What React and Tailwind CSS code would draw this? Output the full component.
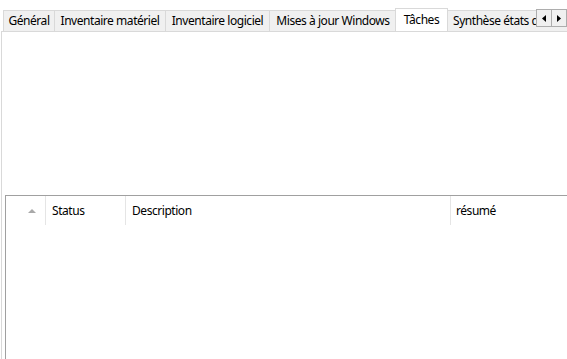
import React from "react";

const font = { fontFamily: '"Segoe UI", "Noto Sans", "Open Sans", sans-serif' };

function Tab({ label, w, selected }) {
  if (selected) {
    return (
      <div
        className="relative z-10 -mx-[2px] mb-[-1px] flex h-[24px] shrink-0 items-start justify-center border border-b-0 border-[#d9d9d9] bg-white pt-[2px] text-[12px] tracking-[-0.45px] text-black"
        style={{ width: w }}
      >
        {label}
      </div>
    );
  }
  return (
    <div
      className="flex h-[21px] shrink-0 items-center justify-center overflow-hidden whitespace-nowrap border-t border-r border-[#d9d9d9] bg-[#f0f0f0] text-[12px] tracking-[-0.45px] text-black first:border-l"
      style={{ width: w }}
    >
      {label}
    </div>
  );
}

export default function App() {
  return (
    <div className="relative h-[359px] w-[567px] overflow-hidden bg-white" style={font}>
      <div className="flex h-[31px] items-end overflow-hidden pl-[3px]">
        <Tab label="Général" w={52} />
        <Tab label="Inventaire matériel" w={111} />
        <Tab label="Inventaire logiciel" w={104} />
        <Tab label="Mises à jour Windows" w={127} />
        <Tab label="Tâches" w={53} selected />
        <div className="flex h-[21px] w-[130px] shrink-0 items-center overflow-hidden whitespace-nowrap border-t border-[#d9d9d9] bg-[#f0f0f0] pl-[7px] text-[12px] tracking-[-0.45px] text-black">
          Synthèse états des mises à jour
        </div>
      </div>

      <div className="absolute left-[536px] top-[9px] flex h-[18px]">
        <div className="flex w-[16px] items-center justify-center border border-[#adadad] bg-[#f0f0f0]">
          <svg width="4" height="7" viewBox="0 0 4 7"><path d="M4 0 L0 3.5 L4 7 Z" fill="#000" /></svg>
        </div>
        <div className="-ml-px flex w-[16px] items-center justify-center border border-[#adadad] bg-[#f0f0f0]">
          <svg width="4" height="7" viewBox="0 0 4 7"><path d="M0 0 L4 3.5 L0 7 Z" fill="#000" /></svg>
        </div>
      </div>

      <div className="ml-[1px] h-[328px] border-t border-l border-[#d9d9d9] pl-[3px] pt-[163px]">
        <div className="h-full border-t border-l border-[#a0a0a0]">
          <div className="flex h-[29px] text-[12px] tracking-[-0.45px] text-black">
            <div className="flex w-[40px] shrink-0 items-center justify-center border-r border-[#e5e5e5] pl-[12px]">
              <svg width="8" height="4" viewBox="0 0 8 4"><path d="M0 4 L4 0 L8 4 Z" fill="#a9a9a9" /></svg>
            </div>
            <div className="flex w-[80px] shrink-0 items-center border-r border-[#e5e5e5] pl-[6px]">Status</div>
            <div className="flex w-[325px] shrink-0 items-center border-r border-[#e5e5e5] pl-[6px]">Description</div>
            <div className="flex flex-1 items-center pl-[5px]">résumé</div>
          </div>
        </div>
      </div>
    </div>
  );
}
